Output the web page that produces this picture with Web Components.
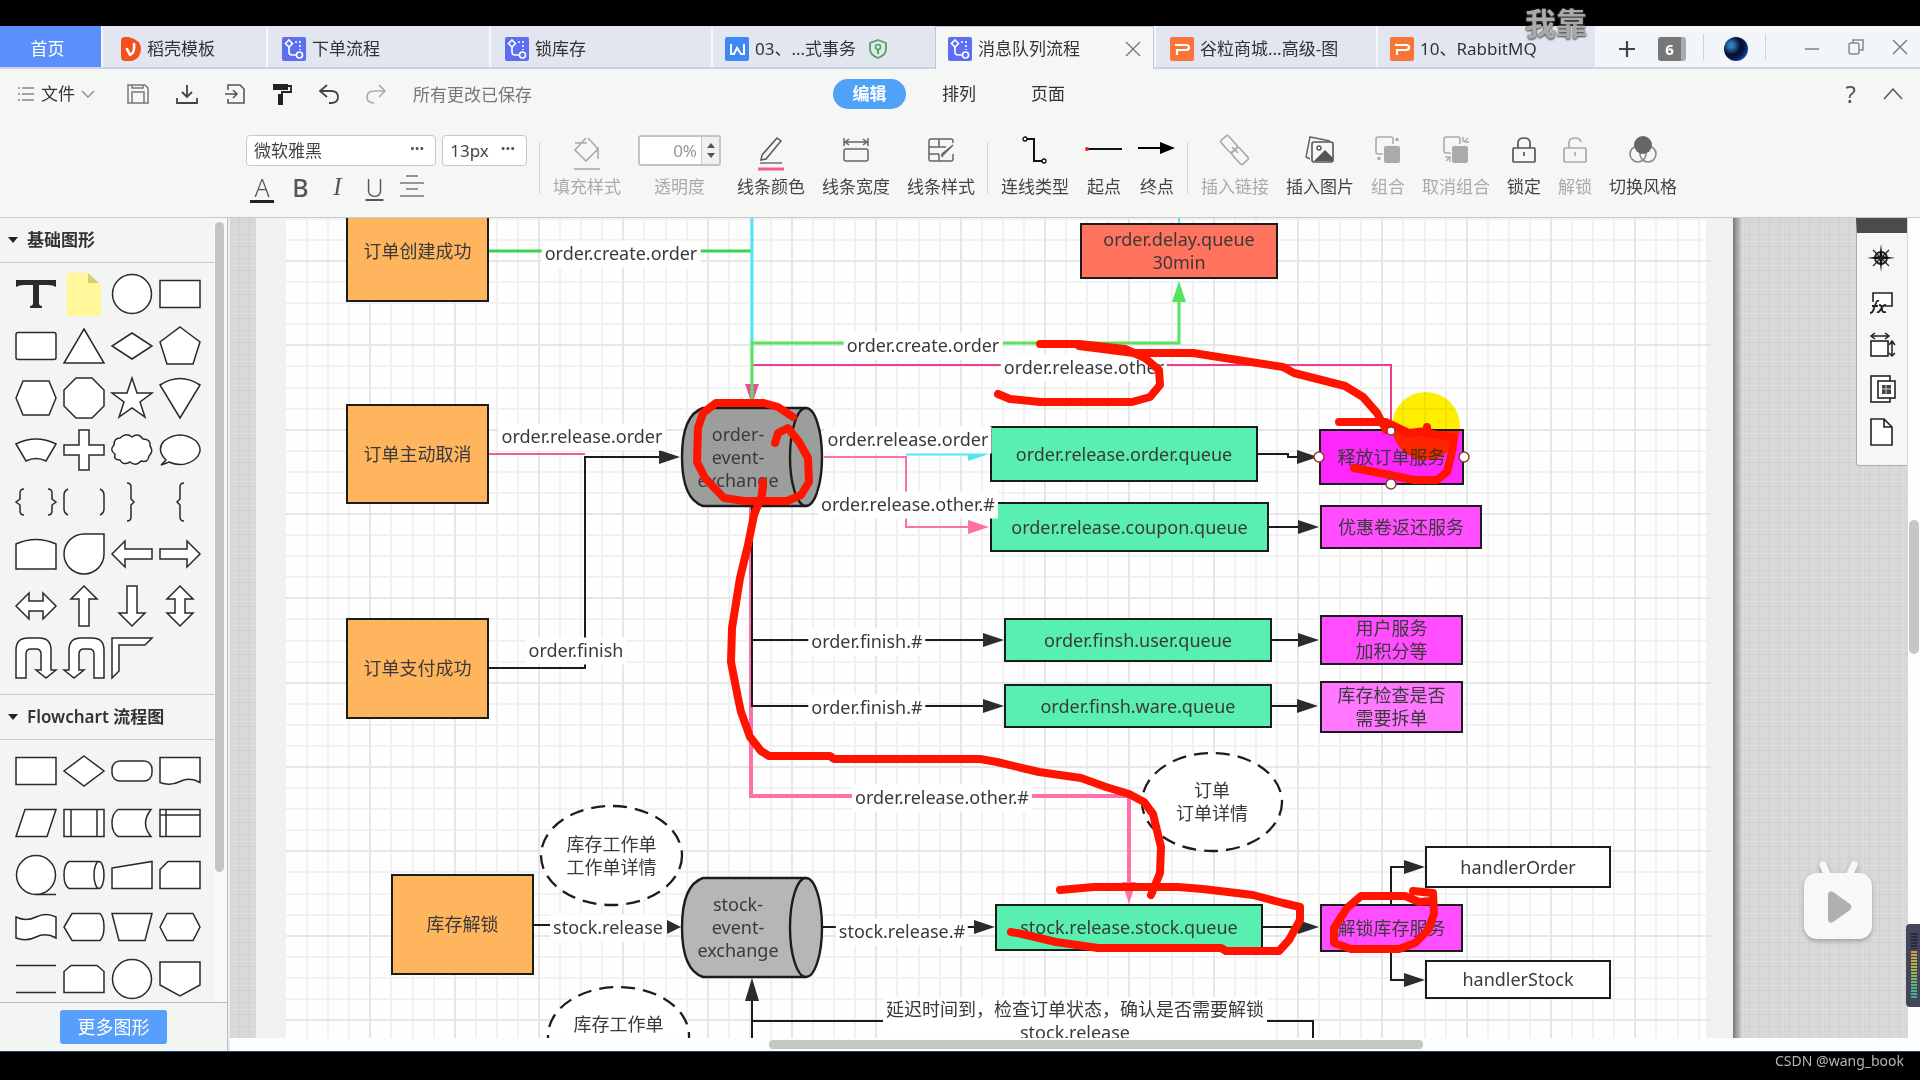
<!DOCTYPE html>
<html lang="zh-CN">
<head>
<meta charset="utf-8">
<title>消息队列流程</title>
<style>
  html, body { margin: 0; height: 100%; background: #000; }
  body { font-family: "Noto Sans", "Noto Sans CJK SC", sans-serif; font-size: 17px; color: #333; overflow: hidden; }
</style>
</head>
<body>
<flow-app></flow-app>
<script>
const define = (name, html, setup) => {
  const tpl = document.createElement('template');
  tpl.innerHTML = html;
  customElements.define(name, class extends HTMLElement {
    constructor() {
      super();
      this.attachShadow({ mode: 'open' }).appendChild(tpl.content.cloneNode(true));
    }
    connectedCallback() {
      if (this.ready) return;
      this.ready = true;
      if (setup) setup(this, this.shadowRoot);
    }
  });
};

/* ---------- icons ---------- */
const ICONS = {
  dock: [20, 24, '<path d="M0 4q0-4 4-4h4q12 3 12 12t-9 12H4q-4 0-4-4z" fill="#f4511e"/><path d="M6 12l3 6q5-2 4-11" fill="none" stroke="#fff" stroke-width="2.600" stroke-linecap="round" stroke-linejoin="round"/>'],
  flow: [24, 24, '<rect width="24" height="24" rx="2" fill="#5d6ff0"/><g fill="none" stroke="#fff" stroke-width="1.6"><path d="M7 3l3.500 3.500L7 10 3.500 6.500z"/><path d="M7 10v5q0 3 3 3h4"/><circle cx="17.500" cy="18" r="3"/><path d="M13 5h5v8" stroke-dasharray="2 2"/></g>'],
  word: [24, 24, '<rect width="24" height="24" rx="2" fill="#3f87f5"/><path d="M6 7v10h3l3-6 4 6h3V7" fill="none" stroke="#fff" stroke-width="2"/>'],
  ppt: [24, 24, '<rect width="24" height="24" rx="2" fill="#fb7437"/><path d="M5 8h11q3 0 3 2.500t-3 2.500H7v5" fill="none" stroke="#fff" stroke-width="2.200"/>'],
  shield: [18, 20, '<path d="M9 1l8 3v6q0 6-8 9-8-3-8-9V4z" fill="none" stroke="#4ea45b" stroke-width="1.800"/><circle cx="9" cy="8" r="2.500" fill="none" stroke="#4ea45b" stroke-width="1.600"/><path d="M9 10v5" stroke="#4ea45b" stroke-width="2"/>'],
  close: [16, 16, '<path d="M1 1l14 14M15 1L1 15" stroke="#777" stroke-width="1.400"/>'],
  plus: [18, 18, '<path d="M9 1v16M1 9h16" stroke="#444" stroke-width="2.200"/>'],
  min: [16, 16, '<path d="M1 10h14" stroke="#888" stroke-width="1.600"/>'],
  restore: [16, 16, '<g fill="none" stroke="#888" stroke-width="1.500"><rect x="1" y="4" width="10" height="11" rx="2"/><path d="M5 4V1h10v10h-4"/></g>'],
  menu: [16, 16, '<path d="M0 2h2M4 2h12M0 8h2M4 8h12M0 14h2M4 14h12" stroke="#888" stroke-width="1.400"/>'],
  down: [12, 8, '<path d="M0 1l6 6 6-6" fill="none" stroke="#888" stroke-width="1.300"/>'],
  up: [20, 12, '<path d="M1 11l9-10 9 10" fill="none" stroke="#555" stroke-width="1.500"/>'],
  save: [22, 20, '<g fill="none" stroke="#777" stroke-width="1.500"><path d="M1 1h17l3 3v15H1z"/><path d="M5 1v3h11V1M5 19V8h12v11"/></g>'],
  download: [22, 20, '<path d="M11 1v12M6 8l5 5 5-5M1 14v5h20v-5" fill="none" stroke="#444" stroke-width="1.800"/>'],
  export: [20, 20, '<path d="M3 6V1h12l4 4v14H3v-4M0 10h11M8 6l4 4-4 4" fill="none" stroke="#555" stroke-width="1.600"/>'],
  painter: [20, 22, '<path d="M1 1h15v6H1z" fill="#222"/><path d="M16 3h3v6h-9v4" fill="none" stroke="#222" stroke-width="1.800"/><path d="M6 11h5v11H6z" fill="#222"/>'],
  undo: [20, 20, '<path d="M8 1L1 7l7 6M1 7h11q7 0 7 6t-7 6h-2" fill="none" stroke="#444" stroke-width="1.800"/>'],
  redo: [20, 20, '<path d="M13 1l6 6-6 6M19 7H9q-8 0-8 6t7 6" fill="none" stroke="#aaa" stroke-width="1.600"/>'],
  align: [26, 24, '<path d="M7 2h12M1 9h24M7 15h12M1 22h24" stroke="#777" stroke-width="1.700"/>'],
  fill: [32, 36, '<g fill="none" stroke="#aaa" stroke-width="1.600"><path d="M15 3L4 15l11 11 12-12L17 3M4 8h12M27 12v12"/><path d="M3 34h26"/></g>'],
  pen: [32, 36, '<path d="M22 3l4 3L11 24l-5 1 1-5z" fill="none" stroke="#555" stroke-width="1.500"/><path d="M5 28h22" stroke="#666" stroke-width="1.400"/><path d="M3 34h26" stroke="#f45a9c" stroke-width="3"/>'],
  width: [32, 36, '<g fill="none" stroke="#666" stroke-width="1.500"><path d="M4 3v8M28 3v8M5 7h22M9 4L5 7l4 3M23 4l4 3-4 3"/><rect x="4" y="14" width="24" height="12" rx="2"/></g>'],
  style: [32, 36, '<g fill="none" stroke="#666" stroke-width="1.500"><path d="M28 8V6q0-2-2-2H6Q4 4 4 6v18q0 2 2 2h20q2 0 2-2v-5M4 12h17M4 19h10M14 4v8M14 19v7M18 20l10-10-11 9v3z"/></g>'],
  link: [32, 36, '<path d="M6 4h9v22h9" fill="none" stroke="#111" stroke-width="2"/><circle cx="6" cy="4" r="2" fill="#fff" stroke="#111" stroke-width="1.300"/><circle cx="25" cy="26" r="2" fill="#fff" stroke="#111" stroke-width="1.300"/>'],
  start: [36, 36, '<path d="M1 14h35" stroke="#111" stroke-width="2"/><circle cx="1" cy="14" r="2" fill="#e22"/>'],
  end: [36, 36, '<path d="M-1 13h24" stroke="#000" stroke-width="2"/><path d="M21 7l15 6-15 6z"/>'],
  chain: [32, 36, '<g fill="none" stroke="#aaa" stroke-width="1.600"><rect x="-5" y="-8" width="10" height="16" rx="2" transform="translate(10 9) rotate(-42)"/><rect x="-5" y="-8" width="10" height="16" rx="2" transform="translate(21 21) rotate(-42)"/><path d="M13 12l6 6"/></g>'],
  image: [32, 36, '<path d="M6 24l-4-2L6 2l20 4" fill="none" stroke="#666" stroke-width="1.500"/><rect x="8" y="7" width="21" height="20" rx="2" fill="#f5f7f5" stroke="#555" stroke-width="1.600"/><circle cx="15" cy="13" r="2" fill="none" stroke="#555" stroke-width="1.400"/><path d="M10 26l11-11 8 8v3z" fill="#555"/>'],
  group: [32, 36, '<path d="M11 19H6q-2 0-2-2V4q0-2 2-2h13q2 0 2 2v5" fill="none" stroke="#aaa" stroke-width="1.600"/><rect x="12" y="11" width="16" height="17" rx="2" fill="#aaa"/><path d="M25 3v3M7 22v3" stroke="#aaa" stroke-width="3"/>'],
  ungroup: [32, 36, '<path d="M11 18H6q-2 0-2-2V4q0-2 2-2h12q2 0 2 2v5" fill="none" stroke="#aaa" stroke-width="1.600"/><rect x="12" y="11" width="16" height="17" rx="2" fill="#aaa"/><path d="M23 7V2M24 7l4-4M24 7h5M5 22h5v5M10 22l-4 4" fill="none" stroke="#aaa" stroke-width="1.400"/>'],
  lock: [32, 36, '<g fill="none" stroke="#555" stroke-width="1.700"><rect x="5" y="13" width="22" height="14" rx="1"/><path d="M10 13V8q0-5 6-5t6 5v5M16 17v4"/></g>'],
  unlock: [32, 36, '<g fill="none" stroke="#aaa" stroke-width="1.700"><rect x="5" y="13" width="22" height="14" rx="1"/><path d="M10 13V8q0-5 6-5 5 0 6 4M16 17v4"/></g>'],
  theme: [32, 36, '<circle cx="11" cy="19" r="8" fill="none" stroke="#888" stroke-width="1.600"/><circle cx="21" cy="19" r="8" fill="none" stroke="#888" stroke-width="1.600"/><circle cx="16" cy="10" r="9" fill="#666"/>'],
  compass: [28, 28, '<circle cx="14" cy="14" r="6" fill="none" stroke="#222" stroke-width="1.800"/><path d="M14 0l1.500 12L28 14l-12.500 1.500L14 28l-1.500-12.500L0 14l12.500-2z" fill="#111"/><path d="M6 6l16 16M22 6L6 22" stroke="#222" stroke-width="1.200"/>'],
  fx: [28, 28, '<path d="M6 13V4h19v13h-7" fill="#fff" stroke="#222" stroke-width="1.600"/><path d="M3 24q3 0 4-5l2-5q1-3 3-2M5 17h6M12 16q3 0 3 4t4 3M19 16q-3 0-5 4t-4 3" fill="none" stroke="#222" stroke-width="1.800"/>'],
  measure: [28, 28, '<rect x="4" y="9" width="17" height="15" fill="#fff" stroke="#222" stroke-width="1.600"/><path d="M5 4h16M8 1L4 4l4 3M18 1l4 3-4 3M25 10v14M22 13l3-4 3 4M22 21l3 3 3-3" fill="none" stroke="#222" stroke-width="1.500"/>'],
  pages: [28, 28, '<rect x="4" y="1" width="19" height="26" fill="#fff" stroke="#222" stroke-width="1.600"/><rect x="11" y="6" width="17" height="17" fill="#fff" stroke="#222" stroke-width="1.600"/><rect x="15" y="10" width="9" height="9" fill="#444"/><path d="M15 14h9M19 10v9" stroke="#ccc"/>'],
  page: [28, 28, '<path d="M4 1h13l8 8v18H4zM17 1v8h8" fill="#fff" stroke="#222" stroke-width="1.600"/>']
};
define('ui-icon', '<style>:host{display:inline-flex;flex:none}svg{display:block;overflow:visible}</style><svg aria-hidden="true"></svg>', (el, root) => {
  const [w, h, body] = ICONS[el.getAttribute('name')];
  const svg = root.querySelector('svg');
  svg.setAttribute('viewBox', `0 0 ${w} ${h}`);
  svg.setAttribute('width', w);
  svg.setAttribute('height', h);
  svg.innerHTML = body;
});

/* ---------- title bar ---------- */
define('doc-tab', `<style>
  :host{display:flex;flex:0 1 var(--w,220px);min-width:0;height:41px;background:#e1e6f0;border-left:2px solid #f4f7fb;box-sizing:border-box}
  :host([home]){background:#5b90fc;border:0}
  :host([active]){background:#f5f7f5;height:43px;border:1px solid #b9c8dc;border-bottom:0;z-index:1}
  button{all:unset;flex:1;display:flex;align-items:center;gap:6px;padding:5px 12px 0 var(--pad,12px);font-size:17px;line-height:24px;color:#333;white-space:nowrap;min-width:0;box-sizing:border-box}
  :host([home]) button{color:#fff;justify-content:center;padding:5px 6px 0 0}
  :host([active]) button{padding-top:2px}
  .end{margin-left:7px;display:flex}
  :host([home]) .end{display:none}
  :host([active]) .end{margin-left:auto}
</style><button type="button"><slot name="icon"></slot><slot></slot><span class="end"><slot name="end"></slot></span></button>`);

define('title-bar', `<style>
  :host{display:flex;height:41px;background:#f2f5fa;border-bottom:2px solid #c8d3e3}
  .win{flex:1;display:flex;align-items:center;padding:5px 12px 0 23px;min-width:0}
  button{all:unset;display:flex;align-items:center;justify-content:center}
  .n{width:23px;height:24px;background:#777;color:#fff;border-radius:3px;border-right:5px solid #aaa;font:bold 15px/24px "Noto Sans",sans-serif;margin-left:22px}
  .s{width:1px;height:26px;background:#d0d5dc;margin:0 20px 5px 17px}
  .a{width:24px;height:24px;border-radius:50%;background:radial-gradient(circle at 30% 35%,#2a7fc0 0 10%,#07102e 40%,#0a1a55 60%,#1550b8 80%,#051030)}
  .w{margin-left:auto;display:flex;gap:28px;padding-bottom:5px}
</style>
<doc-tab home style="--w:101px">首页</doc-tab>
<doc-tab style="--w:165px;--pad:18px"><ui-icon slot="icon" name="dock"></ui-icon>稻壳模板</doc-tab>
<doc-tab style="--w:223px;--pad:14px"><ui-icon slot="icon" name="flow"></ui-icon>下单流程</doc-tab>
<doc-tab style="--w:222px;--pad:14px"><ui-icon slot="icon" name="flow"></ui-icon>锁库存</doc-tab>
<doc-tab style="--w:224px"><ui-icon slot="icon" name="word"></ui-icon>03、...式事务<ui-icon slot="end" name="shield"></ui-icon></doc-tab>
<doc-tab active style="--w:219px"><ui-icon slot="icon" name="flow"></ui-icon>消息队列流程<ui-icon slot="end" name="close"></ui-icon></doc-tab>
<doc-tab style="--w:222px;--pad:14px"><ui-icon slot="icon" name="ppt"></ui-icon>谷粒商城...高级-图</doc-tab>
<doc-tab style="--w:219px"><ui-icon slot="icon" name="ppt"></ui-icon>10、RabbitMQ</doc-tab>
<div class="win"><button type="button" aria-label="新建"><ui-icon name="plus"></ui-icon></button><button type="button" class="n">6</button><span class="s"></span><span class="a"></span><span class="s"></span>
<div class="w"><button type="button" aria-label="最小化"><ui-icon name="min"></ui-icon></button><button type="button" aria-label="还原"><ui-icon name="restore"></ui-icon></button><button type="button" aria-label="关闭"><ui-icon name="close"></ui-icon></button></div></div>`);

/* ---------- menu row ---------- */
define('menu-row', `<style>
  :host{display:flex;align-items:center;height:52px;padding:0 17px 3px 18px;box-sizing:border-box;font-size:17px}
  button{all:unset;display:flex;align-items:center;gap:7px;line-height:24px;white-space:nowrap}
  .left{display:flex;align-items:center;gap:27px;width:815px}
  .file{margin-right:6px}
  .st{color:#777}
  .tabs{display:flex;align-items:center;gap:36px;flex:1}
  .on{background:#50a1f8;color:#fff;border-radius:15px;width:73px;height:30px;justify-content:center;font-weight:bold}
  .tabs button:nth-child(3){margin-left:19px}
  .q{font-size:24px;color:#555;margin-right:27px}
</style>
<div class="left"><button type="button" class="file"><ui-icon name="menu"></ui-icon>文件<ui-icon name="down"></ui-icon></button>
<button type="button" aria-label="保存"><ui-icon name="save"></ui-icon></button><button type="button" aria-label="下载"><ui-icon name="download"></ui-icon></button><button type="button" aria-label="导出"><ui-icon name="export"></ui-icon></button><button type="button" aria-label="格式刷"><ui-icon name="painter"></ui-icon></button><button type="button" aria-label="撤销"><ui-icon name="undo"></ui-icon></button><button type="button" aria-label="重做"><ui-icon name="redo"></ui-icon></button><span class="st">所有更改已保存</span></div>
<div class="tabs"><button type="button" class="on">编辑</button><button type="button">排列</button><button type="button">页面</button></div>
<button type="button" class="q">?</button><button type="button" aria-label="收起"><ui-icon name="up"></ui-icon></button>`);

/* ---------- ribbon ---------- */
define('tool-button', `<style>
  :host{display:flex;flex:none}
  button{all:unset;display:flex;flex-direction:column;align-items:center;gap:4px;font-size:17px;line-height:24px;color:#444;white-space:nowrap}
  :host([off]) button{color:#aaa}
  .i{height:36px;display:flex}
</style><button type="button"><span class="i"><slot name="icon"></slot></span><slot></slot></button>`);

define('tool-ribbon', `<style>
  :host{display:flex;height:97px;box-sizing:border-box;padding:14px 0 0 246px;border-bottom:1px solid #c8cac8}
  .font{display:flex;flex-direction:column;width:281px;gap:8px}
  .row{display:flex;gap:6px}
  .box{position:relative;display:flex;height:31px;box-sizing:border-box;border:1px solid #c8c8c8;border-radius:4px;background:#fff}
  .box::after{content:"···";position:absolute;right:11px;top:0;line-height:26px;font-size:17px;font-weight:bold;color:#555;pointer-events:none}
  .a{flex:191}.b{flex:84}
  select{all:unset;flex:1;width:0;padding:0 7px;font-size:17px;line-height:29px;color:#444}
  .fmt{display:flex;align-items:center}
  .fmt button{all:unset;width:37px;height:26px;text-align:center;font-size:25px;font-weight:300;line-height:26px;color:#555}
  .fmt button:first-child{width:32px}
  .fmt button:last-child{margin-left:4px;width:30px}
  .fa span{border-bottom:3px solid #222;display:inline-block;padding:0 4px;line-height:25px}
  .sep{width:1px;height:52px;background:#d4d6d4;margin-top:7px;flex:none}
  .g{display:flex;gap:17px;padding:0 12px 0 13px}
  .op{display:flex;flex-direction:column;align-items:center;gap:9px;color:#aaa;line-height:24px;font-size:17px;width:83px;margin:0 -1px 0 0}
  .spin{display:flex;width:83px;height:31px;box-sizing:border-box;border:2px solid #c4c4c4;background:#fff;border-radius:3px}
  .spin input{all:unset;width:0;flex:1;text-align:right;padding-right:4px;color:#999;font-size:17px}
  .ar{width:17px;border-left:1px solid #ccc;background:#f1f1f1;display:flex;flex-direction:column;align-items:center;justify-content:space-evenly}
  .ar i{border:4px solid transparent;border-bottom:5px solid #555;border-top:0}
  .ar i+i{border-top:5px solid #555;border-bottom:0}
</style>
<div class="font"><div class="row"><span class="box a"><select aria-label="字体"><option>微软雅黑</option></select></span><span class="box b"><select aria-label="字号"><option>13px</option></select></span></div>
<div class="fmt"><button type="button" class="fa"><span>A</span></button><button type="button" style="margin-left:4px;font-weight:500">B</button><button type="button" style="font-style:italic;font-family:'Liberation Serif',serif">I</button><button type="button" style="text-decoration:underline">U</button><button type="button" aria-label="对齐"><ui-icon name="align"></ui-icon></button></div></div>
<span class="sep" style="margin-left:12px"></span>
<div class="g"><tool-button off><ui-icon slot="icon" name="fill"></ui-icon>填充样式</tool-button>
<div class="op"><span class="spin"><input id="op" value="0%"><span class="ar"><i></i><i></i></span></span><label for="op">透明度</label></div>
<tool-button><ui-icon slot="icon" name="pen"></ui-icon>线条颜色</tool-button>
<tool-button><ui-icon slot="icon" name="width"></ui-icon>线条宽度</tool-button>
<tool-button><ui-icon slot="icon" name="style"></ui-icon>线条样式</tool-button></div>
<span class="sep"></span>
<div class="g"><tool-button><ui-icon slot="icon" name="link"></ui-icon>连线类型</tool-button>
<tool-button><ui-icon slot="icon" name="start"></ui-icon>起点</tool-button>
<tool-button><ui-icon slot="icon" name="end"></ui-icon>终点</tool-button></div>
<span class="sep"></span>
<div class="g"><tool-button off><ui-icon slot="icon" name="chain"></ui-icon>插入链接</tool-button>
<tool-button><ui-icon slot="icon" name="image"></ui-icon>插入图片</tool-button>
<tool-button off><ui-icon slot="icon" name="group"></ui-icon>组合</tool-button>
<tool-button off><ui-icon slot="icon" name="ungroup"></ui-icon>取消组合</tool-button>
<tool-button><ui-icon slot="icon" name="lock"></ui-icon>锁定</tool-button>
<tool-button off><ui-icon slot="icon" name="unlock"></ui-icon>解锁</tool-button>
<tool-button><ui-icon slot="icon" name="theme"></ui-icon>切换风格</tool-button></div>`);

/* ---------- shape palette ---------- */
const BASIC = [
  '<path d="M-20-14h40v7q-3-2-8-2H3v18q0 3 3 3v2H-6v-2q3 0 3-3V-9h-9q-5 0-8 2z" fill="#2a2a2a" stroke="none"/>',
  '<path d="M-17-21H4l13 12v31h-34z" fill="#fff79a" stroke="none"/><path d="M4-21l11 10H4z" fill="#d5cd78" stroke="none"/>',
  '<circle r="19.500"/>', '<path d="M-20-13.500h40v27h-40z"/>',
  '<rect x="-20" y="-13.500" width="40" height="27" rx="2"/>', '<path d="M0-17l20 34h-40z"/>', '<path d="M0-13l20 13L0 13-20 0z"/>', '<path d="M0-19l20 15-7 22h-26l-7-22z"/>',
  '<path d="M-13-17h26l7 17-7 17h-26l-7-17z"/>', '<path d="M-8-20H8l12 12V8L8 20H-8L-20 8V-8z"/>', '<path d="M0-20l5 15h15L8 4l5 15L0 10l-13 9 5-15-12-9h15z"/>', '<path d="M-20-13q20-13 40 0L0 20z"/>',
  '<path d="M-20-6q20-10 40 0L10 11q-10-5-20 0z"/>', '<path d="M-5-20H5V-5h15V5H5v15H-5V5h-15V-5h15z"/>', '<path d="M-12-12q6-6 12-1 6-5 11 2 8 0 7 7 4 5-1 10-1 7-8 5-5 6-11 1-7 4-10-2-7 0-5-6-6-4-1-9 0-7 6-7z"/>', '<path d="M-14 10q-10-10-2-19 16-12 32 0 9 10-2 19-12 8-25 2l-8 3z"/>',
  '<g fill="none"><path d="M-12-13q-4 0-4 4v6l-4 3 4 3v6q0 4 4 4M12-13q4 0 4 4v6l4 3-4 3v6q0 4-4 4"/></g>', '<g fill="none"><path d="M-16-13q-4 2-4 6V7q0 4 4 6M16-13q4 2 4 6V7q0 4-4 6"/></g>', '<path fill="none" d="M-5-19q4 0 4 4V-3l3 3-3 3v12q0 4-4 4"/>', '<path fill="none" d="M4-19q-4 0-4 4V-3l-3 3 3 3v12q0 4 4 4"/>',
  '<path d="M-20-10q20-9 40 0v25h-40z"/>', '<path d="M20-20v20A20 20 0 1 1 0-20z"/>', '<path d="M-20 0l13-13v8h27V5H-7v8z"/>', '<path d="M20 0L7-13v8h-27V5H7v8z"/>',
  '<path d="M-20 0l13-13v8H7v-8L20 0 7 13V5H-7v8z"/>', '<path d="M0-20L13-7H5v27H-5V-7h-8z"/>', '<path d="M0 20L13 7H5v-27H-5V7h-8z"/>', '<path d="M0-20L13-7H5V7h8L0 20-13 7h8V-7h-8z"/>',
  '<path d="M-20 20V-8q0-12 12-12H3q12 0 12 12v20h5L10 20 0 12h5V-4q0-5-5-5h-5q-5 0-5 5v24z"/>', '<path d="M20 20V-8q0-12-12-12H-3q-12 0-12 12v20h-5l10 8 10-8h-5V-4q0-5 5-5h5q5 0 5 5v24z"/>', '<path d="M-20-20h40l-7 7h-26v26l-7 7z"/>'
];
const FLOW = [
  '<path d="M-20-13.500h40v27h-40z"/>', '<path d="M0-15l20 15L0 15-20 0z"/>', '<rect x="-20" y="-10" width="40" height="20" rx="8"/>', '<path d="M-20-13.500h40v25q-10-6-20-1t-20 1z"/>',
  '<path d="M-11-13.500h31l-9 27h-31z"/>', '<path d="M-20-13.500h40v27h-40zM-13-13.500v27M13-13.500v27"/>', '<path d="M19-13.500h-33q-6 4-6 13.500t6 13.500h33q-11-13 0-27z"/>', '<path d="M-20-13.500h40v27h-40zM-20-8h40M-14-13.500v27"/>',
  '<circle r="19.500"/><path d="M0 19.500h20"/>', '<path d="M14-13.500h-29q-5 3-5 13.500t5 13.500h29"/><ellipse cx="15" rx="5" ry="13.500"/>', '<path d="M-20-7l40-6.500v27h-40z"/>', '<path d="M-12-13.500h32v27h-40v-19z"/>',
  '<path d="M-20-10q10 5 20 0t20 0v21q-10-6-20-1t-20 1z"/>', '<path d="M-12-13.500h28q4 4 4 13.500t-4 13.500h-28L-20 0z"/>', '<path d="M-20-13.500h40l-7 27h-26z"/>', '<path d="M-13-13.500h26L20 0l-7 13.500h-26L-20 0z"/>',
  '<path d="M-20-13.500h40M-20 13.500h40"/>', '<path d="M-13-13.500h26l7 6v21h-40v-21z"/>', '<circle r="19.500"/>', '<path d="M-20-17h40V6L0 17-20 6z"/>'
];
define('shape-group', `<style>
  :host{display:block;border-bottom:1px solid #c9cbc9}
  h3{margin:0;display:flex;align-items:center;gap:9px;height:44px;padding-left:8px;border-bottom:1px solid #c9cbc9;font-size:17px;line-height:24px;font-weight:600;color:#333}
  h3::before{content:"";border:5px solid transparent;border-top:6px solid #222;border-bottom:0}
  .grid{display:grid;grid-template-columns:repeat(4,48px);grid-auto-rows:52px;padding:5px 0 10px 12px}
  svg{width:48px;height:52px;fill:#fff;stroke:#2a2a2a;stroke-width:1.500px}
</style><h3><slot></slot></h3><div class="grid"></div>`, (el, root) => {
  const list = el.getAttribute('set') === 'flow' ? FLOW : BASIC;
  root.querySelector('.grid').innerHTML = list.map(s => `<svg viewBox="-24 -26 48 52" aria-hidden="true">${s}</svg>`).join('');
});
define('shape-palette', `<style>
  :host{display:flex;flex-direction:column;width:230px;flex:none;background:#f3f5f3;border-right:2px solid #eceeec;box-sizing:border-box}
  .list{flex:1;min-height:0;overflow:hidden;display:flex}
  .groups{flex:1;min-width:0}
  .bar{width:14px;padding:4px 3px 0 1px;box-sizing:border-box;background:#f7f8f7;border-right:1px solid #bbb}
  .bar i{display:block;width:9px;height:650px;border-radius:5px;background:#c3c5c3}
  .more{height:49px;flex:none;border-top:1px solid #bbb;border-right:1px solid #bbb;padding:7px 0 0 60px;box-sizing:border-box}
  button{all:unset;width:107px;height:34px;border-radius:3px;background:#579ffb;color:#fff;font-size:18px;line-height:34px;text-align:center}
</style><div class="list"><div class="groups"><shape-group set="basic">基础图形</shape-group><shape-group set="flow">Flowchart 流程图</shape-group></div><div class="bar"><i></i></div></div>
<div class="more"><button type="button">更多图形</button></div>`);

/* ---------- diagram ---------- */
define('flow-node', `<style>
  :host{position:absolute;display:flex;align-items:center;justify-content:center;box-sizing:border-box;border:2px solid #1c1c1c;font-size:18px;line-height:23px;text-align:center;white-space:nowrap;color:#3a3a3a}
  :host([kind]){border:0;background:none!important}
  svg{position:absolute;inset:0;width:100%;height:100%;overflow:visible}
  .t{position:relative}
  :host([kind=cylinder]) .t{padding-right:28px}
</style><svg aria-hidden="true"></svg><div class="t"><slot></slot></div>`, (el, root) => {
  const [x, y, w, h] = el.getAttribute('box').split(' ').map(Number);
  const fill = el.getAttribute('fill') || '#fff';
  Object.assign(el.style, { left: x + 'px', top: y + 'px', width: w + 'px', height: h + 'px', background: fill });
  const kind = el.getAttribute('kind');
  const svg = root.querySelector('svg');
  if (!kind) svg.remove();
  if (kind === 'ellipse') svg.innerHTML = `<ellipse cx="${w / 2}" cy="${h / 2}" rx="${w / 2 - 1}" ry="${h / 2 - 1}" fill="#fff" stroke="#1c1c1c" stroke-width="2.300" stroke-dasharray="14 8"/>`;
  if (kind === 'cylinder') svg.innerHTML = `<g fill="${fill}" stroke="#1c1c1c" stroke-width="2.400"><path d="M${w - 17} 1H22Q1 8 1 ${h / 2}T22 ${h - 1}H${w - 17}"/><ellipse cx="${w - 17}" cy="${h / 2}" rx="16" ry="${h / 2 - 1}"/></g>`;
});
define('edge-label', `<style>
  :host{position:absolute;transform:translate(-50%,-50%);padding:1px 3px 3px;background:#fff;font-size:18px;line-height:23px;text-align:center;white-space:nowrap;color:#3a3a3a}
</style><slot></slot>`, el => {
  const [x, y] = el.getAttribute('at').split(' ');
  el.style.left = x + 'px';
  el.style.top = y + 'px';
});

const INK = '#1c1c1c', PINK = '#ff6fa8', CYAN = '#4fe6f5', GREEN = '#57e35f';
const line = (d, c = INK, w = 2) => `<path d="${d}" fill="none" stroke="${c}" stroke-width="${w}"/>`;
const arrow = (x, y, dir, c = '#2c2c2c', len = 21) => {
  const r = { right: 0, down: 90, left: 180, up: 270 }[dir];
  return `<path d="M0 0L-${len}-7V7z" fill="${c}" transform="translate(${x} ${y}) rotate(${r})"/>`;
};
const EDGES = [
  line('M489 251H751', '#3bd24c', 3), line('M751 507V796H1129V884', PINK, 4), arrow(1129, 904, 'down', PINK, 22),
  line('M752 218V343', CYAN, 3), line('M1179 218V224', CYAN), line('M752 365H1391V430', '#e8408c'),
  arrow(752, 404, 'down', '#e8509c', 20), line('M752 406V343H1179V300', GREEN, 3), arrow(1179, 281, 'up', GREEN),
  line('M489 454H585', '#e8609c'), line('M489 668H585V457H660'), arrow(680, 457, 'right'),
  line('M824 457H906V527H970', PINK), arrow(989, 527, 'right', PINK), line('M906 454H970', CYAN, 3), arrow(989, 454, 'right', CYAN),
  line('M1257 454H1288V457H1300'), arrow(1318, 457, 'right'), line('M1269 527H1300'), arrow(1319, 527, 'right'),
  line('M752 507V706H984M752 640H984'), arrow(1004, 640, 'right'), arrow(1004, 706, 'right'),
  line('M1271 640H1300M1271 706H1300M1263 927H1300'), arrow(1319, 640, 'right'), arrow(1318, 706, 'right'), arrow(1319, 927, 'right'),
  line('M534 925H560'), arrow(681, 927, 'right', '#2c2c2c', 14), line('M822 927H976'), arrow(995, 927, 'right'),
  line('M1391 904V867H1406M1391 952V980H1406'), arrow(1425, 867, 'right'), arrow(1425, 980, 'right'),
  line('M752 1040V998M752 1021H1313V1040'), arrow(752, 978, 'up', '#2c2c2c', 23)
].join('');
const MARKS = [
  'M793 417L778 407 764 403H716L703 413 698 428 697 462 705 478 724 498 744 501H787L801 495 809 482 808 458 799 442 788 428 778 433 775 443',
  'M763 482L762 495 754 515 748 545 740 578 732 628 731 662 738 698 741 712 750 737 761 751 769 756H830L834 759H980L997 762 1039 772 1081 778 1106 787 1129 794 1144 802 1153 814 1161 847 1160 873 1151 895',
  'M1060 890L1094 887H1178L1203 889 1253 895 1283 903 1300 907V920L1289 940 1279 951H1226L1221 948H1098L1056 942 1022 934 1011 932',
  'M1413 891L1433 893 1434 914 1428 930 1415 943 1399 949H1351L1334 943V928L1347 908 1361 896H1405L1419 902 1431 901',
  'M998 394L1010 399 1040 402H1132L1150 397 1160 385 1159 370 1145 358 1125 349 1079 344H1040',
  'M1079 346L1134 353H1193L1244 361 1283 367 1294 373 1345 386 1363 397 1377 413 1386 430',
  'M1339 422H1386L1409 433 1427 431V427 433L1454 438 1452 452 1447 472 1437 480H1414L1400 477 1354 468'
].map(d => line(d, '#ff1400', 8)).join('');

define('flow-canvas', `<style>
  :host{display:grid;grid-template:1fr 13px / 1fr 12px;flex:1;min-width:0;background:#fdfdfd}
  .view{position:relative;overflow:hidden;background:repeating-linear-gradient(90deg,#0000 0 3px,#ffffff1c 3px 4px,#0000 4px 9px,#0000000a 9px 10px),repeating-linear-gradient(0deg,#0000 0 4px,#ffffff1c 4px 5px,#0000 5px 11px,#00000008 11px 12px),#d7d8da}
  .board{position:absolute;left:-230px;top:-218px;width:1920px;height:1080px}
  svg.l{position:absolute;left:0;top:0;width:1920px;height:1080px;pointer-events:none}
  .dot{mix-blend-mode:multiply}
  .v{padding:302px 1px 0}
  .v i{display:block;width:10px;height:134px;border-radius:5px;background:#c5c7c5}
  .h{grid-column:1/3;padding:2px 0 0 539px}
  .h i{display:block;width:654px;height:9px;border-radius:4px;background:#c5c7c5}
  .side{position:absolute;right:1px;top:0;width:51px;box-sizing:border-box;border-left:1px solid #aaa;border-bottom:1px solid #aaa;border-radius:0 0 0 4px;background:#f5f6f5;border-top:15px solid #4a4c4a;display:flex;flex-direction:column;align-items:center;gap:15px;padding:11px 2px 19px 0}
  .side button{all:unset;display:flex}
  .side button:first-child{margin-bottom:2px}
</style>
<div class="view"><div class="board">
<svg class="l" viewBox="0 0 1920 1080" aria-hidden="true"><defs><linearGradient id="sh"><stop offset="0" stop-color="#777"/><stop offset="1" stop-color="#777" stop-opacity="0"/></linearGradient></defs>
<rect x="256" y="200" width="1477" height="850" fill="#f0f1f0"/><rect x="1733" y="200" width="9" height="850" fill="url(#sh)"/><rect x="286" y="200" width="1420" height="850" fill="#fefefe"/><g id="grid" shape-rendering="crispEdges"></g><g id="edges"></g></svg>
<flow-node box="346 201 143 101" fill="#ffb45e">订单创建成功</flow-node>
<flow-node box="346 404 143 100" fill="#ffb45e">订单主动取消</flow-node>
<flow-node box="346 618 143 101" fill="#ffb45e">订单支付成功</flow-node>
<flow-node box="391 874 143 101" fill="#ffb45e">库存解锁</flow-node>
<flow-node kind="cylinder" box="681 407 142 100" fill="#9c9e9c">order-<br>event-<br>exchange</flow-node>
<flow-node kind="cylinder" box="681 877 142 101" fill="#b5b7b5">stock-<br>event-<br>exchange</flow-node>
<flow-node box="1080 223 198 56" fill="#ff735f">order.delay.queue<br>30min</flow-node>
<flow-node box="990 426 268 56" fill="#58efb1">order.release.order.queue</flow-node>
<flow-node box="990 502 279 50" fill="#58efb1">order.release.coupon.queue</flow-node>
<flow-node box="1004 618 268 44" fill="#58efb1">order.finsh.user.queue</flow-node>
<flow-node box="1004 684 268 44" fill="#58efb1">order.finsh.ware.queue</flow-node>
<flow-node box="995 904 268 47" fill="#58efb1">stock.release.stock.queue</flow-node>
<flow-node box="1319 429 145 56" fill="#fd26fb">释放订单服务</flow-node>
<flow-node box="1320 505 162 44" fill="#ff4dff">优惠卷返还服务</flow-node>
<flow-node box="1320 615 143 50" fill="#ff4dff">用户服务<br>加积分等</flow-node>
<flow-node box="1320 681 143 52" fill="#ff78ff">库存检查是否<br>需要拆单</flow-node>
<flow-node box="1320 904 143 48" fill="#ff4dff">解锁库存服务</flow-node>
<flow-node box="1425 846 186 42">handlerOrder</flow-node>
<flow-node box="1425 960 186 39">handlerStock</flow-node>
<flow-node kind="ellipse" box="1141 752 142 100">订单<br>订单详情</flow-node>
<flow-node kind="ellipse" box="540 805 143 101">库存工作单<br>工作单详情</flow-node>
<flow-node kind="ellipse" box="547 986 143 100">库存工作单<br>工作单详情</flow-node>
<edge-label at="621 254">order.create.order</edge-label>
<edge-label at="923 346">order.create.order</edge-label>
<edge-label at="1084 368">order.release.other</edge-label>
<edge-label at="582 437">order.release.order</edge-label>
<edge-label at="908 440">order.release.order</edge-label>
<edge-label at="908 505">order.release.other.#</edge-label>
<edge-label at="576 651">order.finish</edge-label>
<edge-label at="867 642">order.finish.#</edge-label>
<edge-label at="867 708">order.finish.#</edge-label>
<edge-label at="942 798">order.release.other.#</edge-label>
<edge-label at="608 928">stock.release</edge-label>
<edge-label at="902 932">stock.release.#</edge-label>
<edge-label at="1075 1022">延迟时间到，检查订单状态，确认是否需要解锁<br>stock.release</edge-label>
<svg class="l dot" viewBox="0 0 1920 1080" aria-hidden="true"><circle cx="1426" cy="426" r="34" fill="#fff000"/></svg>
<svg class="l" viewBox="0 0 1920 1080" aria-hidden="true"><g id="marks" stroke-linecap="round" stroke-linejoin="round"></g><g fill="#fff" stroke="#8a3a3a" stroke-width="1.500"><circle cx="1319" cy="457" r="5"/><circle cx="1464" cy="457" r="5"/><circle cx="1391" cy="484" r="5"/><circle cx="1391" cy="431" r="4"/></g></svg>
</div>
<div class="side"><button type="button" aria-label="导航"><ui-icon name="compass"></ui-icon></button><button type="button" aria-label="公式"><ui-icon name="fx"></ui-icon></button><button type="button" aria-label="度量"><ui-icon name="measure"></ui-icon></button><button type="button" aria-label="图层"><ui-icon name="pages"></ui-icon></button><button type="button" aria-label="页面"><ui-icon name="page"></ui-icon></button></div>
</div><div class="v"><i></i></div><div class="h"><i></i></div>`, (el, root) => {
  let minor = '', major = '';
  for (let i = 1; i < 68; i++) {
    const x = Math.round(286 + i * 253 / 12);
    if (i % 4) minor += `M${x} 200V1050`; else major += `M${x} 200V1050`;
  }
  for (let i = -2; i < 38; i++) {
    const y = Math.round(261 + i * 253 / 12);
    if (i % 4) minor += `M286 ${y}H1706`; else major += `M286 ${y}H1712`;
  }
  root.getElementById('grid').innerHTML = line(minor, '#f0f1f0', 2) + line(major, '#e5e7e5', 2);
  root.getElementById('edges').innerHTML = EDGES;
  root.getElementById('marks').innerHTML = MARKS;
});

/* ---------- floating player overlays ---------- */
define('player-overlay', `<style>
  :host{position:absolute;inset:0;pointer-events:none;overflow:hidden}
  .say{position:absolute;right:333px;top:2px;font-size:31px;line-height:42px;font-weight:bold;color:#aaa;text-shadow:0 0 2px #444,0 1px 2px #555}
  .mark{position:absolute;right:16px;bottom:8px;font-size:14px;line-height:22px;color:#b5b5b5}
  .tv{position:absolute;right:46px;bottom:138px;filter:drop-shadow(0 2px 2px #0004)}
  .meter{position:absolute;right:0;bottom:73px}
</style><span class="say">我靠</span>
<svg class="tv" width="72" height="82" viewBox="0 0 72 82" aria-hidden="true"><path d="M21 5l5 11M52 5l-5 11" stroke="#f8f8f8" stroke-width="7" stroke-linecap="round"/><rect x="2" y="13" width="68" height="66" rx="13" fill="#f8f8f8"/><path d="M26 34v26q1 4 5 2l17-12q3-3 0-6L31 32q-4-2-5 2z" fill="#aeb0b2"/></svg>
<svg class="meter" width="14" height="83" viewBox="0 0 14 83" aria-hidden="true"><defs><linearGradient id="m" x2="0" y2="1"><stop offset="0" stop-color="#e0a030"/><stop offset=".4" stop-color="#a8b848"/><stop offset="1" stop-color="#30b0a0"/></linearGradient></defs><rect width="20" height="83" rx="4" fill="#43465a"/><path d="M8 9v16" stroke="#2a2c3c" stroke-width="7" stroke-dasharray="2 1"/><rect x="5" y="26" width="6" height="48" fill="url(#m)"/><path d="M8 26v48" stroke="#43465a" stroke-width="7" stroke-dasharray="1 2"/></svg>
<span class="mark">CSDN @wang_book</span>`);

define('flow-app', `<style>
  :host{display:flex;flex-direction:column;height:100vh;box-sizing:border-box;padding:26px 0 28px;background:#000;position:relative}
  .win{flex:1;min-height:0;display:flex;flex-direction:column;background:#f5f7f5;border-bottom:1px solid #1f4668}
  .body{flex:1;min-height:0;display:flex}
</style><div class="win"><title-bar></title-bar><menu-row></menu-row><tool-ribbon></tool-ribbon><div class="body"><shape-palette></shape-palette><flow-canvas></flow-canvas></div></div><player-overlay></player-overlay>`);
</script>
</body>
</html>
